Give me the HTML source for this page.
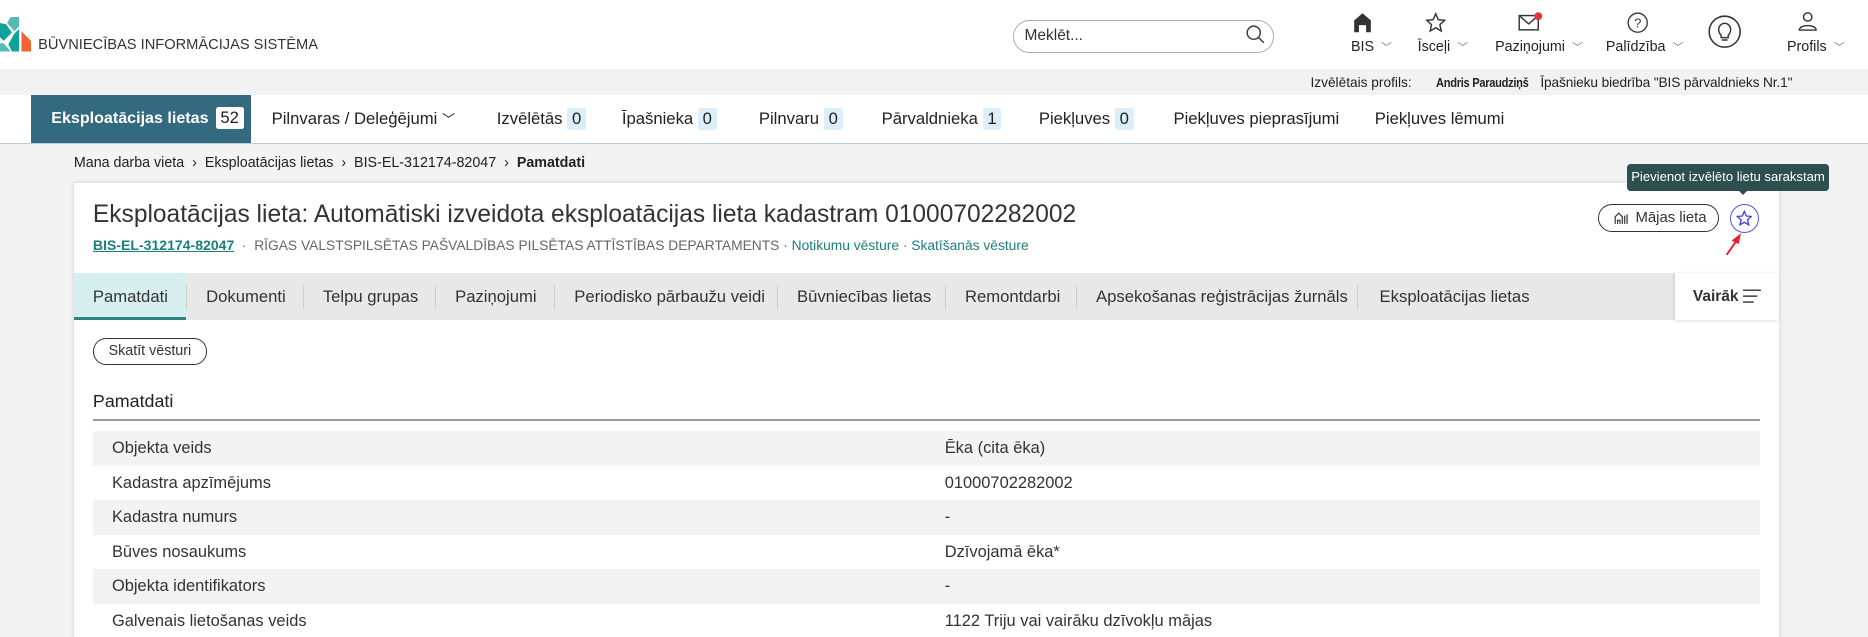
<!DOCTYPE html>
<html><head><meta charset="utf-8">
<style>
html,body{margin:0;padding:0;overflow:hidden}
body{width:1868px;height:637px;background:#f3f3f3;font-family:"Liberation Sans",Arial,sans-serif;color:#333}
#w{zoom:1.19133;width:1568px;height:535px;position:relative;overflow:hidden}
.a{position:absolute;white-space:nowrap}
.hdr{left:0;top:0;width:1568px;height:58px;background:#fff}
.pb{left:0;top:58px;width:1568px;height:22px;background:#f2f2f2;font-size:12px}
.nav{left:0;top:80px;width:1568px;height:40px;background:#fff;border-bottom:1px solid #b9d0dc}
.ni{top:0;height:40px;line-height:40px;font-size:14px;color:#222}
.bd{display:inline-block;background:#dbeef9;padding:0 4px;line-height:18px;margin-left:4px;border-radius:2px}
.lbl{font-size:12px;color:#222;top:33px}
.chev{font-size:9px;color:#777;margin-left:6px}
.card{left:62px;top:154px;width:1431px;height:400px;background:#fff;box-shadow:0 0 4px rgba(0,0,0,.15)}
.tab{top:229px;height:40px;line-height:40px;font-size:14px;color:#333}
.sep{top:239px;width:1px;height:20px;background:#ccc}
.row{left:78px;width:1399px;height:29px;line-height:29px;font-size:13.8px;color:#333}
.row span{position:absolute;left:16px}
.row b{position:absolute;left:715px;font-weight:normal}
.g{background:#f3f3f3}
</style></head><body><div id="w">
<div class="a hdr"></div>
<svg class="a" style="left:0;top:14px" width="28" height="30" viewBox="0 0 28 30">
<polygon points="9,0 16,0 16,8 12,12 6,5" fill="#57b9b6"/>
<polygon points="0,5 5,6 10,13 3,20 0,17" fill="#10a19b"/>
<polygon points="12,14 16,10 16,29 10,29 7,23" fill="#10a19b"/>
<polygon points="0,22 3,22 9,29 0,29" fill="#57b9b6"/>
<polygon points="18,12 26,20 26,29 18,29" fill="#f26531"/>
</svg>
<div class="a" style="left:32px;top:31px;font-size:12.3px;color:#333">BŪVNIECĪBAS INFORMĀCIJAS SISTĒMA</div>
<div class="a" style="left:850px;top:17px;width:218px;height:26px;border:1px solid #aaa;border-radius:14px;background:#fff"></div>
<div class="a" style="left:860px;top:23px;font-size:13px;color:#333">Meklēt...</div>
<svg class="a" style="left:1046px;top:21px" width="16" height="16" viewBox="0 0 16 16"><circle cx="6.5" cy="6.5" r="5.5" fill="none" stroke="#444" stroke-width="1.3"/><line x1="10.5" y1="10.5" x2="15" y2="15" stroke="#444" stroke-width="1.3"/></svg>
<svg class="a" style="left:1136px;top:10px" width="16" height="18" viewBox="0 0 16 18"><path d="M1 7 L8 1 L15 7 V17 H11 V11 H5 V17 H1Z" fill="#333"/></svg>
<div class="a lbl" style="left:1134px">BIS<span class="chev">﹀</span></div>
<svg class="a" style="left:1196px;top:10px" width="18" height="18" viewBox="0 0 18 18"><path d="M9 1.5 L11.2 6.5 L16.5 7 L12.5 10.6 L13.7 16 L9 13.2 L4.3 16 L5.5 10.6 L1.5 7 L6.8 6.5Z" fill="none" stroke="#333" stroke-width="1.2"/></svg>
<div class="a lbl" style="left:1190px">Īsceļi<span class="chev">﹀</span></div>
<svg class="a" style="left:1274px;top:10px" width="22" height="16" viewBox="0 0 22 16"><rect x="1" y="3" width="16" height="12" fill="none" stroke="#333" stroke-width="1.2"/><path d="M1 3 L9 10 L17 3" fill="none" stroke="#333" stroke-width="1.2"/><circle cx="17" cy="3.5" r="3.3" fill="#e8303f"/></svg>
<div class="a lbl" style="left:1255px">Paziņojumi<span class="chev">﹀</span></div>
<svg class="a" style="left:1366px;top:10px" width="18" height="18" viewBox="0 0 18 18"><circle cx="9" cy="9" r="8" fill="none" stroke="#333" stroke-width="1.1"/><text x="9" y="13" font-size="11" text-anchor="middle" fill="#333" font-family="Liberation Sans">?</text></svg>
<div class="a lbl" style="left:1348px">Palīdzība<span class="chev">﹀</span></div>
<svg class="a" style="left:1434px;top:13px" width="28" height="28" viewBox="0 0 28 28"><circle cx="14" cy="14" r="13" fill="none" stroke="#333" stroke-width="1.3"/><path d="M11 17 C9 15 9 13 9 12 A5 5 0 0 1 19 12 C19 13 19 15 17 17 V19 H11Z M11.5 21 H16.5" fill="none" stroke="#333" stroke-width="1.2"/></svg>
<svg class="a" style="left:1508px;top:9px" width="18" height="18" viewBox="0 0 18 18"><circle cx="9" cy="5" r="3.5" fill="none" stroke="#333" stroke-width="1.2"/><path d="M2 16 C2 11 16 11 16 16Z" fill="none" stroke="#333" stroke-width="1.2"/></svg>
<div class="a lbl" style="left:1500px">Profils<span class="chev">﹀</span></div>

<div class="a pb"></div>
<div class="a" style="left:1100px;top:63px;font-size:11.5px;color:#222">Izvēlētais profils:</div>
<div class="a" style="left:1205px;top:63px;font-size:11px;color:#222;font-weight:bold;letter-spacing:-0.3px;transform:scaleX(0.85);transform-origin:left">Andris Paraudziņš</div>
<div class="a" style="left:1293px;top:63px;font-size:11.5px;color:#222;letter-spacing:-0.1px">Īpašnieku biedrība "BIS pārvaldnieks Nr.1"</div>

<div class="a nav"></div>
<div class="a ni" style="left:26px;top:80px;width:185px;background:#336a80;color:#fff;font-weight:bold;padding-left:17px;box-sizing:border-box;font-size:13.5px">Eksploatācijas lietas<span class="bd" style="background:#fff;color:#222;font-weight:normal;margin-left:6px;font-size:14px">52</span></div>
<div class="a ni" style="left:228px;top:80px">Pilnvaras / Deleģējumi <span style="font-size:11px">﹀</span></div>
<div class="a ni" style="left:417px;top:80px">Izvēlētās<span class="bd">0</span></div>
<div class="a ni" style="left:522px;top:80px">Īpašnieka<span class="bd">0</span></div>
<div class="a ni" style="left:637px;top:80px">Pilnvaru<span class="bd">0</span></div>
<div class="a ni" style="left:740px;top:80px">Pārvaldnieka<span class="bd">1</span></div>
<div class="a ni" style="left:872px;top:80px">Piekļuves<span class="bd">0</span></div>
<div class="a ni" style="left:985px;top:80px">Piekļuves pieprasījumi</div>
<div class="a ni" style="left:1154px;top:80px">Piekļuves lēmumi</div>

<div class="a" style="left:62px;top:130px;font-size:12px;color:#222">Mana darba vieta &nbsp;›&nbsp; Eksploatācijas lietas &nbsp;›&nbsp; BIS-EL-312174-82047 &nbsp;›&nbsp; <b>Pamatdati</b></div>

<div class="a card"></div>
<div class="a" style="left:78px;top:169px;font-size:20.6px;color:#333">Eksploatācijas lieta: Automātiski izveidota eksploatācijas lieta kadastram 01000702282002</div>
<div class="a" style="left:78px;top:199px;font-size:11.6px;color:#666"><span style="color:#1a7f7a;font-weight:bold;text-decoration:underline;font-size:11.8px">BIS-EL-312174-82047</span> &nbsp;·&nbsp; RĪGAS VALSTSPILSĒTAS PAŠVALDĪBAS PILSĒTAS ATTĪSTĪBAS DEPARTAMENTS · <span style="color:#1a7f7a">Notikumu vēsture</span> · <span style="color:#1a7f7a">Skatīšanās vēsture</span></div>
<div class="a" style="left:1341px;top:171px;width:100px;height:22px;border:1px solid #333;border-radius:12px;font-size:12.5px;line-height:22px"><svg style="position:absolute;left:13px;top:6px" width="12" height="11" viewBox="0 0 12 11"><path d="M1 10 V4 L4 1 L7 4 V10 M3 10 V7 H5 V10 M9 3 V10 M11 2 V10" fill="none" stroke="#333" stroke-width="1"/></svg><span style="position:absolute;left:31px">Mājas lieta</span></div>
<div class="a" style="left:1452px;top:171px;width:23px;height:23px;border:1px solid #5555ee;border-radius:50%"></div>
<svg class="a" style="left:1457px;top:176px" width="14" height="14" viewBox="0 0 18 18"><path d="M9 1.5 L11.2 6.5 L16.5 7 L12.5 10.6 L13.7 16 L9 13.2 L4.3 16 L5.5 10.6 L1.5 7 L6.8 6.5Z" fill="none" stroke="#4444ee" stroke-width="1.5"/></svg>
<div class="a" style="left:1366px;top:138px;width:169px;height:22px;background:#2d4f4f;border-radius:3px;color:#fff;font-size:11px;line-height:22px;text-align:center">Pievienot izvēlēto lietu sarakstam</div>
<div class="a" style="left:1460px;top:160px;width:0;height:0;border-left:4px solid transparent;border-right:4px solid transparent;border-top:4px solid #2d4f4f"></div>
<svg class="a" style="left:1440px;top:194px" width="30" height="22" viewBox="0 0 30 22"><line x1="9" y1="20" x2="18" y2="7" stroke="#e8202a" stroke-width="1.6"/><polygon points="21,2 13,8 19,11" fill="#e8202a"/></svg>

<div class="a" style="left:62px;top:229px;width:1344px;height:40px;background:#e8e8e8"></div>
<div class="a" style="left:1406px;top:229px;width:87px;height:40px;background:#fff;box-shadow:-1px 1px 3px rgba(0,0,0,.12)"></div>
<div class="a" style="left:62px;top:229px;width:94px;height:37px;background:#d8efef;border-bottom:3px solid #2e8580"></div>
<div class="a tab" style="left:78px">Pamatdati</div>
<div class="a tab" style="left:173px">Dokumenti</div>
<div class="a tab" style="left:271px">Telpu grupas</div>
<div class="a tab" style="left:382px">Paziņojumi</div>
<div class="a tab" style="left:482px">Periodisko pārbaužu veidi</div>
<div class="a tab" style="left:669px">Būvniecības lietas</div>
<div class="a tab" style="left:810px">Remontdarbi</div>
<div class="a tab" style="left:920px">Apsekošanas reģistrācijas žurnāls</div>
<div class="a tab" style="left:1158px">Eksploatācijas lietas</div>
<div class="a sep" style="left:156px"></div><div class="a sep" style="left:254px"></div><div class="a sep" style="left:365px"></div><div class="a sep" style="left:465px"></div><div class="a sep" style="left:652px"></div><div class="a sep" style="left:793px"></div><div class="a sep" style="left:903px"></div><div class="a sep" style="left:1139px"></div>
<div class="a tab" style="left:1421px;font-weight:bold;font-size:13px">Vairāk</div>
<svg class="a" style="left:1463px;top:243px" width="15" height="12" viewBox="0 0 15 12"><line x1="0" y1="1" x2="15" y2="1" stroke="#333" stroke-width="1.2"/><line x1="0" y1="6" x2="12" y2="6" stroke="#333" stroke-width="1.2"/><line x1="0" y1="11" x2="9" y2="11" stroke="#333" stroke-width="1.2"/></svg>

<div class="a" style="left:78px;top:284px;width:94px;height:21px;border:1px solid #333;border-radius:11px;font-size:12px;line-height:21px;text-align:center">Skatīt vēsturi</div>
<div class="a" style="left:78px;top:328px;font-size:15px;color:#222">Pamatdati</div>
<div class="a" style="left:78px;top:352px;width:1399px;height:1px;background:#999"></div>
<div class="a row g" style="top:362px"><span>Objekta veids</span><b>Ēka (cita ēka)</b></div>
<div class="a row" style="top:391px"><span>Kadastra apzīmējums</span><b>01000702282002</b></div>
<div class="a row g" style="top:420px"><span>Kadastra numurs</span><b>-</b></div>
<div class="a row" style="top:449px"><span>Būves nosaukums</span><b>Dzīvojamā ēka*</b></div>
<div class="a row g" style="top:478px"><span>Objekta identifikators</span><b>-</b></div>
<div class="a row" style="top:507px"><span>Galvenais lietošanas veids</span><b>1122 Triju vai vairāku dzīvokļu mājas</b></div>
</div></body></html>
